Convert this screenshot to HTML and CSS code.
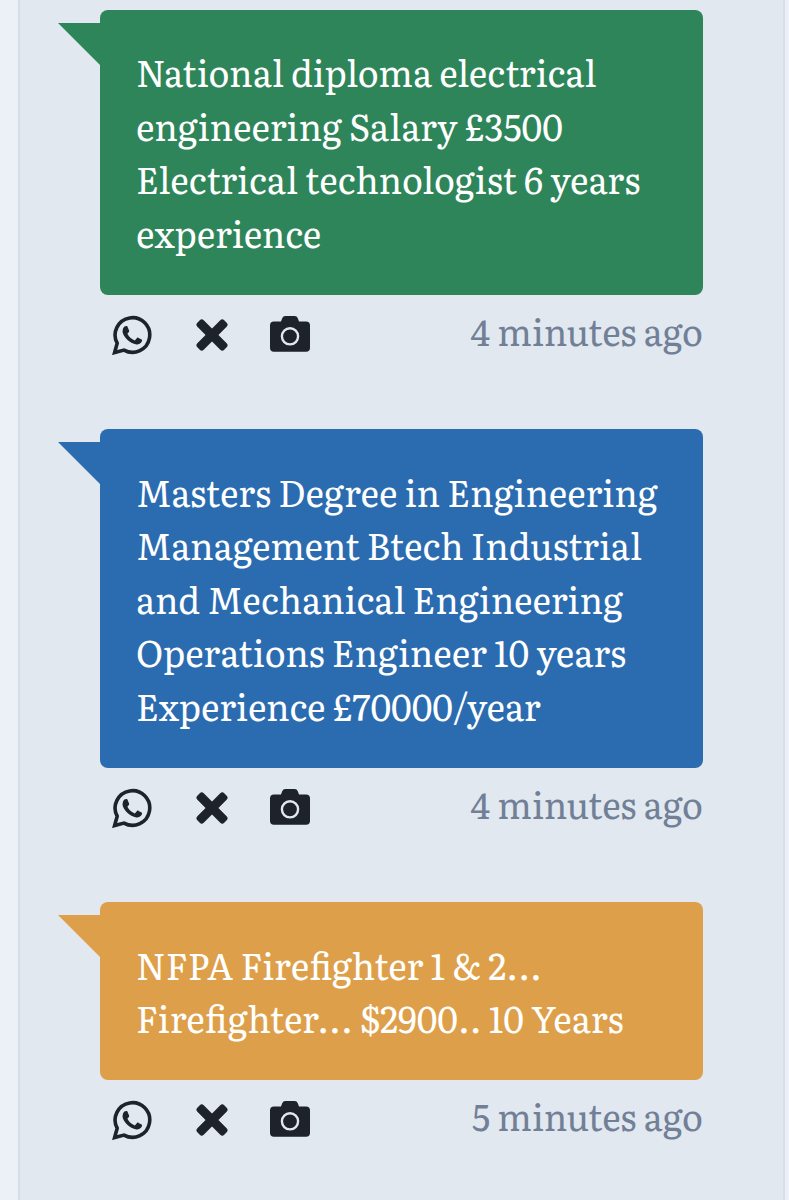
FILE: index.html
```
<!DOCTYPE html>
<html lang="en">
<head>
    <meta charset="UTF-8">
    <meta name="viewport" content="width=device-width, initial-scale=1.0">
    <title>Messages</title>
    <link rel="stylesheet" href="styles.css">
</head>
<body>
    <svg class="sprite" aria-hidden="true">
        <symbol id="whatsapp" viewBox="0 0 40 40">
            <path d="M2.6 37.6 L5.2 28.2 A17.3 17.3 0 1 1 12 35.1 Z" fill="none" stroke="currentColor" stroke-width="3.6"/>
            <path d="M11 13.5 C12 11 14 10.5 15.3 11.2 L17.2 15.8 C17.3 17 16 18 15.4 18.8 C17.4 22.4 19.6 24.2 22.8 25.4 L25 22.9 C25.6 22.4 26 22.6 26.6 22.9 L30 24.8 C30.4 27.5 27.5 29.8 24.5 29.4 C17.5 28.5 11 21.5 10.5 16.5 Z" fill="currentColor"/>
        </symbol>
        <symbol id="times" viewBox="0 0 32 32">
            <g transform="rotate(45 16 16)" fill="currentColor">
                <rect x="-3" y="11.5" width="38" height="9" rx="2.8"/>
                <rect x="11.5" y="-3" width="9" height="38" rx="2.8"/>
            </g>
        </symbol>
        <symbol id="camera" viewBox="0 0 40 36">
            <path d="M4 5.5 H11 L12.2 2.2 Q13 0 15.4 0 H24.6 Q27 0 27.8 2.2 L29 5.5 H36 Q40 5.5 40 9.3 V32 Q40 35.7 36 35.7 H4 Q0 35.7 0 32 V9.3 Q0 5.5 4 5.5 Z" fill="currentColor"/>
            <circle class="lens" cx="20" cy="20.3" r="8.1"/>
        </symbol>
    </svg>

    <main class="feed">
        <article class="message">
            <div class="bubble green">
                <p>National diploma electrical engineering Salary £3500 Electrical technologist 6 years experience</p>
            </div>
            <div class="meta">
                <svg class="icon whatsapp"><use href="#whatsapp"/></svg>
                <svg class="icon times"><use href="#times"/></svg>
                <svg class="icon camera"><use href="#camera"/></svg>
                <time>4 minutes ago</time>
            </div>
        </article>

        <article class="message">
            <div class="bubble blue">
                <p>Masters Degree in Engineering Management Btech Industrial and Mechanical Engineering Operations Engineer 10 years Experience £70000/year</p>
            </div>
            <div class="meta">
                <svg class="icon whatsapp"><use href="#whatsapp"/></svg>
                <svg class="icon times"><use href="#times"/></svg>
                <svg class="icon camera"><use href="#camera"/></svg>
                <time>4 minutes ago</time>
            </div>
        </article>

        <article class="message">
            <div class="bubble orange">
                <p>NFPA Firefighter 1 &amp; 2... Firefighter... $2900.. 10 Years</p>
            </div>
            <div class="meta">
                <svg class="icon whatsapp"><use href="#whatsapp"/></svg>
                <svg class="icon times"><use href="#times"/></svg>
                <svg class="icon camera"><use href="#camera"/></svg>
                <time>5 minutes ago</time>
            </div>
        </article>
    </main>
</body>
</html>
```
FILE: styles.css
```
* {
    margin: 0;
    padding: 0;
    box-sizing: border-box;
}

body {
    height: 1200px;
    overflow: hidden;
    background: #ebf1f6;
    font-family: Literata, "Liberation Serif", serif;
    font-size: 35.68px;
    line-height: 1.5;
}

.sprite {
    display: none;
}

.feed {
    height: 1200px;
    margin: 0 4px 0 18px;
    padding: 9.6px 80.4px 0;
    background: #e1e8f0;
    border: solid #d6dfe9;
    border-width: 0 2px;
}

.message {
    width: 602.5px;
    margin-bottom: 55px;
}

.bubble {
    position: relative;
    padding: 1em;
    border-radius: 8px;
    color: #fff;
}

.bubble::before {
    content: "";
    position: absolute;
    top: 13px;
    left: -42px;
    border-top: 42px solid;
    border-left: 42px solid transparent;
}

.green {
    background: #2f855a;
}

.green::before {
    border-top-color: #2f855a;
}

.blue {
    background: #2b6cb0;
}

.blue::before {
    border-top-color: #2b6cb0;
}

.orange {
    background: #de9f4a;
}

.orange::before {
    border-top-color: #de9f4a;
}

.meta {
    display: flex;
    align-items: center;
    height: 79px;
    color: #1e222a;
}

.icon {
    flex: none;
}

.whatsapp {
    width: 40px;
    height: 40px;
    margin-left: 11.5px;
}

.times {
    width: 32px;
    height: 32px;
    margin-left: 44.5px;
}

.camera {
    width: 40px;
    height: 36px;
    margin: -2px 0 0 42px;
}

.lens {
    fill: none;
    stroke: #e1e8f0;
    stroke-width: 2.4;
}

time {
    margin: -8px 0 0 auto;
    color: #718096;
}
```
